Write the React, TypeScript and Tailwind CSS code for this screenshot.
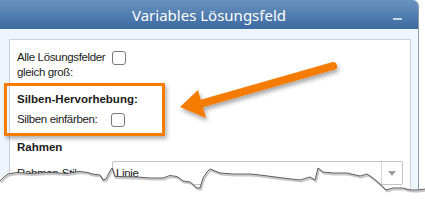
import React from "react"

const edge: [number, number][] = [
  [0, 181], [4, 177], [8, 174], [17, 172.5], [30, 173.5], [50, 172.5], [67, 173.5], [80, 171.5], [88, 172.5],
  [92, 174], [100, 175], [103, 180], [106, 179], [109, 173], [112, 168], [115, 176.5], [137, 177],
  [150, 178], [163, 178], [170, 175.5], [177, 176.5], [183, 181], [190, 182], [197, 188], [200, 188],
  [203, 178], [207, 172], [210, 169], [220, 173], [233, 174], [250, 174], [260, 175], [283, 178],
  [300, 180], [310, 177], [315, 180], [318, 168], [323, 172], [333, 173], [347, 173], [360, 176],
  [367, 174], [373, 178], [380, 184], [386, 190], [393, 188], [403, 188], [410, 190], [418, 190],
  [425, 189],
]

function TornEdge() {
  const line = edge.map(([x, y], i) => `${i === 0 ? "M" : "L"}${x} ${y}`).join(" ")
  const fill = `${line} L425 201 L0 201 Z`
  return (
    <svg className="absolute left-0 top-0 pointer-events-none" width="425" height="201" viewBox="0 0 425 201">
      <path d={fill} fill="#ffffff" />
      <path d={line} fill="none" stroke="#c8c8c8" strokeWidth="2" transform="translate(1 1.5)" />
      <path d={line} fill="none" stroke="#4a4a4a" strokeWidth="0.9" />
    </svg>
  )
}

function Arrow() {
  return (
    <svg className="absolute left-0 top-0 pointer-events-none" width="425" height="201" viewBox="0 0 425 201">
      <defs>
        <filter id="sh" x="-20%" y="-20%" width="140%" height="160%">
          <feDropShadow dx="1.5" dy="3" stdDeviation="2" floodColor="#000" floodOpacity="0.35" />
        </filter>
      </defs>
      <g filter="url(#sh)">
        <line x1="333" y1="66" x2="200" y2="104" stroke="#f67c00" strokeWidth="8" strokeLinecap="round" />
        <polygon points="180,107 198,90 206,118" fill="#f67c00" />
      </g>
    </svg>
  )
}

function Checkbox() {
  return <div className="w-[14px] h-[14px] rounded-[3px] border border-[#7a7a7a] bg-white shrink-0" />
}

export default function App() {
  return (
    <div className="relative w-[425px] h-[201px] overflow-hidden bg-white font-['Liberation_Sans',Arial,sans-serif] text-[#1a1a1a]">
      <div className="w-[419px] h-full flex flex-col rounded-tr-[6px] overflow-hidden border-r border-[#8c9aab]">
        <div className="h-[29px] shrink-0 grid grid-cols-[1fr_auto_1fr] items-center bg-gradient-to-b from-[#6a93be] to-[#3b6aa1]">
          <div />
          <span className="text-white text-[15px] font-['Noto_Sans',sans-serif] leading-none pt-[1px]">
            Variables Lösungsfeld
          </span>
          <div className="flex justify-end pr-[16px] pt-[9px]">
            <div className="w-[9px] h-[2px] bg-[#c7d7ea]" />
          </div>
        </div>
        <div className="flex-1 bg-[#eef5fc] pt-[10px] pl-[9px] pr-[7px]">
          <div className="h-full bg-white border border-[#c9d2dd] pl-[7px] pt-[10px] text-[11.5px] leading-[15px] tracking-[-0.35px]">
            <div className="flex items-start">
              <div className="w-[95px]">
                <div>Alle Lösungsfelder</div>
                <div>gleich groß:</div>
              </div>
              <div className="mt-[1px]">
                <Checkbox />
              </div>
            </div>
            <div className="mt-[12px] font-bold text-[11.5px] tracking-[0px]">Silben-Hervorhebung:</div>
            <div className="mt-[5px] flex items-center">
              <div className="w-[94px]">Silben einfärben:</div>
              <Checkbox />
            </div>
            <div className="mt-[13px] font-bold text-[11.5px] tracking-[0px]">Rahmen</div>
            <div className="mt-[6px] flex items-center">
              <div className="w-[95px]">Rahmen-Stil:</div>
              <div className="w-[291px] h-[24px] flex border border-[#c4c4c4] rounded-[2px]">
                <div className="flex-1 pl-[3px] flex items-center">Linie</div>
                <div className="w-[21px] border-l border-[#d6d6d6] flex items-center justify-center">
                  <svg width="8" height="5" viewBox="0 0 8 5">
                    <polygon points="0,0 8,0 4,5" fill="#a0a0a0" />
                  </svg>
                </div>
              </div>
            </div>
          </div>
        </div>
      </div>

      <div className="absolute left-[4px] top-[83px] w-[161px] h-[53px] border-[3px] border-[#f67c00] shadow-[2px_3px_4px_rgba(0,0,0,0.3)]" />
      <Arrow />
      <TornEdge />
    </div>
  )
}
